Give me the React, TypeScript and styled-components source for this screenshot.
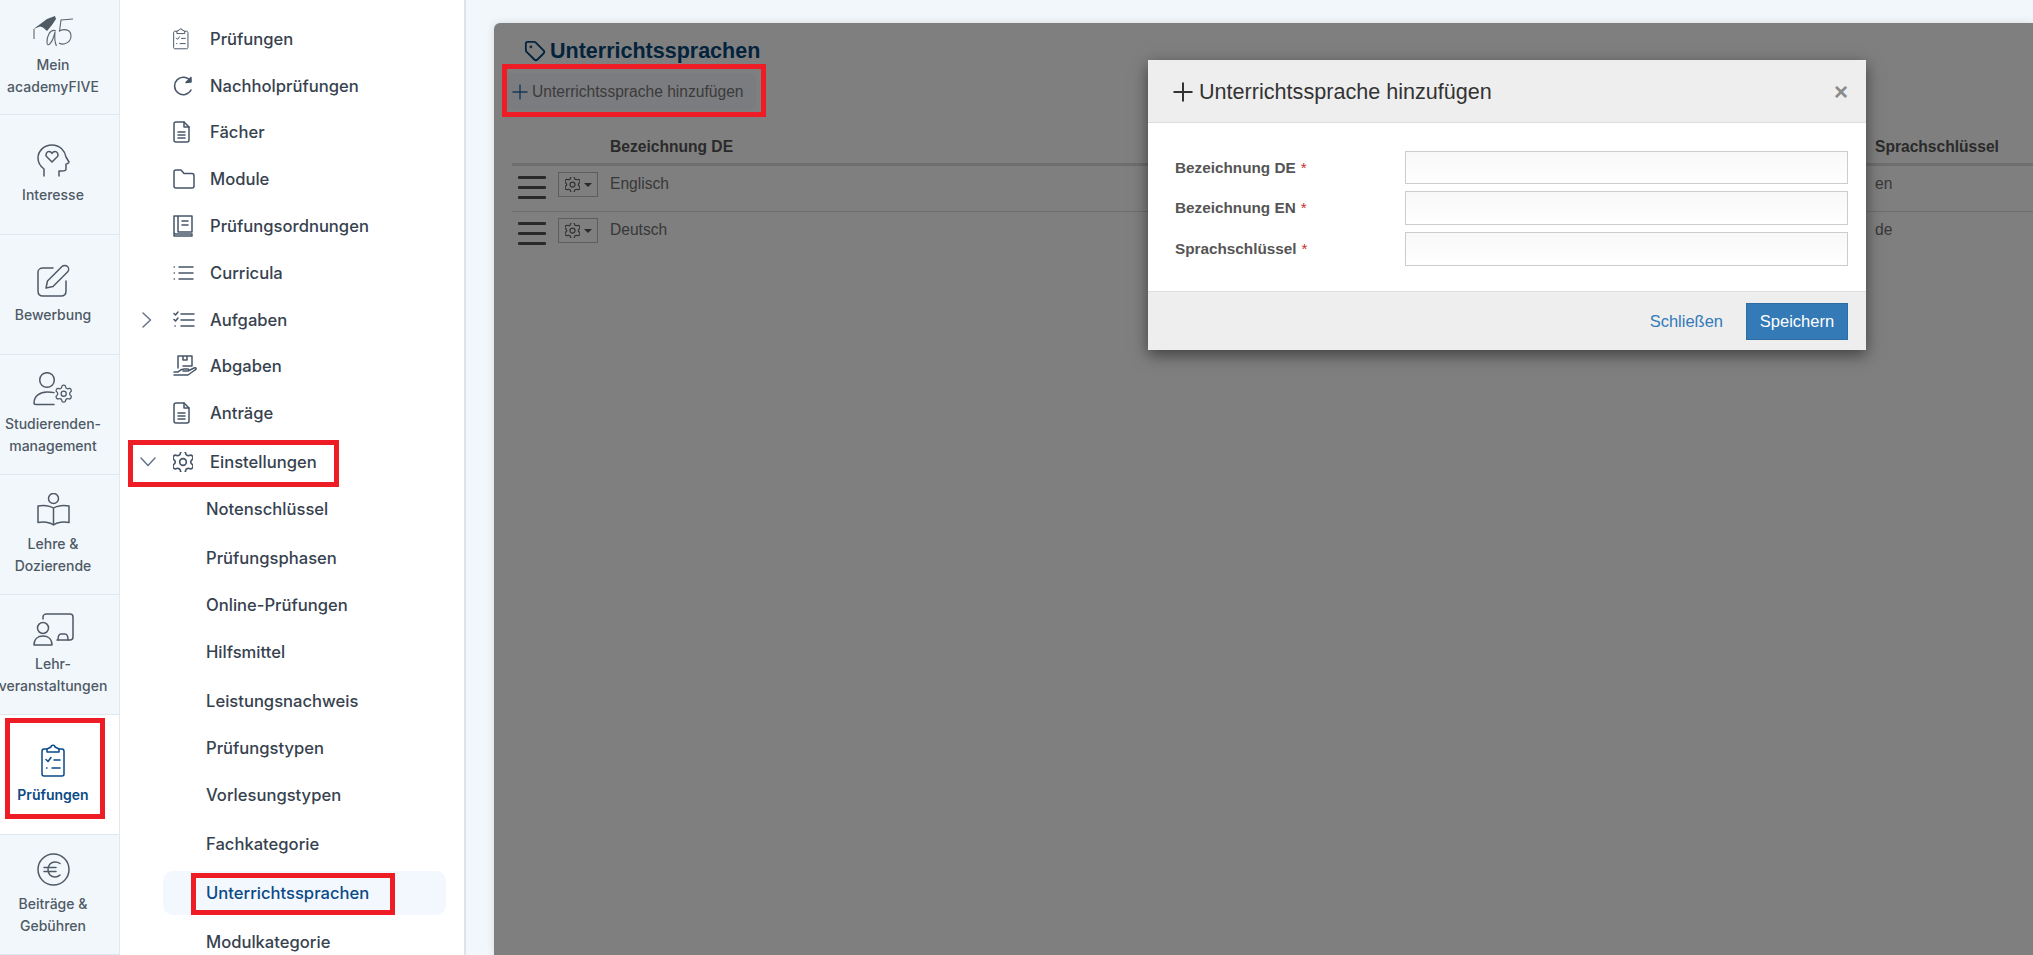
import { ReactNode } from "react";
import styled, { createGlobalStyle } from "styled-components";
import { Plus, Tag } from "lucide-react";

const GlobalStyle = createGlobalStyle`
  html, body {
    margin: 0;
    padding: 0;
    background: #f2f7fb;
    overflow: hidden;
  }
  * {
    box-sizing: border-box;
  }
`;

const Page = styled.div`
  position: relative;
  display: flex;
  width: 2033px;
  height: 955px;
  overflow: hidden;
  background: #f2f7fb;
  font-family: Inter, "Liberation Sans", sans-serif;
`;

const Rail = styled.aside`
  flex: 0 0 120px;
  min-width: 0;
  overflow: hidden;
  border-right: 1px solid #e0e9f0;
  background: #f2f7fb;
`;

const RailItem = styled.div<{ $active?: boolean; $first?: boolean }>`
  position: relative;
  display: flex;
  flex-direction: column;
  align-items: center;
  justify-content: center;
  gap: 7px;
  height: ${(p) => (p.$first ? "115px" : "120px")};
  padding-right: 13px;
  border-bottom: 1px solid #dfe8ef;
  background: ${(p) => (p.$active ? "#fff" : "transparent")};
  color: ${(p) => (p.$active ? "#0b4a86" : "#4e5a66")};
`;

const RailLabel = styled.div<{ $active?: boolean }>`
  font-size: 14px;
  line-height: 22px;
  font-weight: ${(p) => (p.$active ? 600 : 500)};
  text-align: center;
  white-space: nowrap;
`;

const Glyph = styled.svg`
  display: block;
  flex: none;
  fill: none;
  stroke: currentColor;
  stroke-width: 1.5;
  stroke-linecap: round;
  stroke-linejoin: round;
`;

const Nav = styled.nav`
  flex: 0 0 346px;
  padding-top: 17px;
  border-right: 2px solid #dde5ec;
  background: #fff;
`;

const NavRow = styled.div<{ $gap: number }>`
  position: relative;
  display: flex;
  align-items: center;
  height: 44px;
  margin-top: ${(p) => p.$gap}px;
  padding-left: 20px;
  color: #37424f;
  font-size: 16.6px;
  font-weight: 500;
`;

const ChevronSlot = styled.span`
  display: flex;
  flex: 0 0 28px;
  color: #64748b;
`;

const IconSlot = styled.span`
  display: flex;
  flex: 0 0 28px;
  min-width: 0;
  margin-right: 14px;
  padding-left: 5px;
  color: #475569;
`;

const SubRow = styled.div<{ $gap: number; $active?: boolean }>`
  position: relative;
  display: flex;
  align-items: center;
  width: 283px;
  height: 44px;
  margin-top: ${(p) => p.$gap}px;
  margin-left: 43px;
  padding-left: 43px;
  border-radius: 10px;
  background: ${(p) => (p.$active ? "#f2f8fd" : "transparent")};
  color: ${(p) => (p.$active ? "#0b4a86" : "#37424f")};
  font-size: 16.6px;
  font-weight: 500;
`;

// the red marker frames that were painted over the screenshot
const Marker = styled.div<{ $left: number; $top: number; $w: number; $h: number }>`
  position: absolute;
  z-index: 5;
  left: ${(p) => p.$left}px;
  top: ${(p) => p.$top}px;
  width: ${(p) => p.$w}px;
  height: ${(p) => p.$h}px;
  border: 5px solid #ee1c25;
  pointer-events: none;
`;

const Main = styled.main`
  flex: 1;
  min-width: 0;
  padding: 23px 0 0 28px;
  background: #f2f7fb;
`;

const Panel = styled.section`
  position: relative;
  height: 100%;
  padding: 11px 0 0 13px;
  border-radius: 6px 0 0 0;
  background: #fff;
  box-shadow: 0 0 8px rgba(0, 0, 0, 0.12);
  font-family: "Liberation Sans", Arial, sans-serif;
  overflow: hidden;
`;

const Backdrop = styled.div`
  position: absolute;
  inset: 0;
  z-index: 2;
  background: rgba(0, 0, 0, 0.5);
`;

const Title = styled.h1`
  display: flex;
  align-items: center;
  gap: 4px;
  height: 34px;
  margin: 0 0 5px 17px;
  color: #07467a;
  font-size: 21.5px;
  font-weight: 700;
`;

const AddButton = styled.div`
  position: relative;
  display: flex;
  align-items: center;
  width: 249px;
  height: 37px;
  padding-left: 5px;
  border-radius: 5px;
  background: #f6f9fe;
  color: #777;
  font-size: 15.6px;
`;

const AddIcon = styled.span`
  display: flex;
  margin-left: -4px;
  color: #2f6ea8;
`;

const Table = styled.div`
  margin: 18px 0 0 5px;
`;

const TableHead = styled.div`
  display: grid;
  grid-template-columns: 98px 1fr 158px;
  align-items: center;
  height: 38px;
  padding-top: 3px;
  border-bottom: 3px solid #ddd;
  color: #555;
  font-size: 15.6px;
  font-weight: 700;
`;

const TableRow = styled.div<{ $last?: boolean }>`
  display: grid;
  grid-template-columns: 98px 1fr 158px;
  height: 46px;
  padding-top: 8px;
  border-bottom: ${(p) => (p.$last ? "0" : "1px solid #ddd")};
  color: #707070;
  font-size: 15.6px;
  line-height: 20px;
`;

const RowTools = styled.div`
  display: flex;
  align-items: flex-start;
  gap: 12px;
  padding-left: 6px;
`;

const Burger = styled.div`
  display: flex;
  flex-direction: column;
  gap: 7px;
  width: 28px;
  margin-top: 2px;
`;

const BurgerBar = styled.span`
  height: 3px;
  border-radius: 1px;
  background: #555;
`;

const GearButton = styled.div`
  display: flex;
  align-items: center;
  justify-content: center;
  gap: 4px;
  width: 40px;
  height: 25px;
  margin-top: -2px;
  border: 1px solid #bbb;
  color: #666;
`;

const Caret = styled.span`
  width: 0;
  height: 0;
  border-top: 4px solid #555;
  border-left: 4px solid transparent;
  border-right: 4px solid transparent;
`;

const Modal = styled.div`
  position: absolute;
  z-index: 3;
  left: 1148px;
  top: 60px;
  display: flex;
  flex-direction: column;
  width: 718px;
  height: 290px;
  background: #fff;
  box-shadow: 0 5px 15px rgba(0, 0, 0, 0.5);
  font-family: "Liberation Sans", Arial, sans-serif;
`;

const ModalHead = styled.header`
  display: flex;
  align-items: center;
  height: 63px;
  padding: 2px 18px 0 26px;
  border-bottom: 1px solid #ddd;
  background: #eee;
  color: #333;
  font-size: 21.6px;
`;

const ModalTitle = styled.div`
  display: flex;
  flex: 1;
  align-items: center;
  gap: 1px;
`;

const ModalPlus = styled.span`
  display: flex;
  margin-left: -6px;
`;

const CloseMark = styled.span`
  color: #8a8a8a;
  font-size: 24px;
  font-weight: 700;
  line-height: 1;
`;

const ModalBody = styled.div`
  display: flex;
  flex-direction: column;
  flex: 1;
  gap: 7px;
  padding: 28px 18px 0 27px;
`;

const Field = styled.div`
  display: flex;
  align-items: center;
  justify-content: space-between;

  &:first-child input {
    height: 33px;
  }
`;

const FieldLabel = styled.label`
  color: #555;
  font-size: 15.3px;
  font-weight: 700;
`;

const Required = styled.span`
  margin-left: 5px;
  color: #c9302c;
  font-weight: 400;
`;

const FieldInput = styled.input`
  width: 443px;
  height: 34px;
  padding: 0 8px;
  border: 1px solid #ccc;
  border-radius: 0;
  background: linear-gradient(#f8f8f8, #fff);
  outline: none;
`;

const ModalFoot = styled.footer`
  display: flex;
  align-items: center;
  justify-content: flex-end;
  gap: 23px;
  height: 59px;
  padding: 0 18px;
  border-top: 1px solid #ddd;
  background: #eee;
  font-size: 16.5px;
`;

const CloseLink = styled.span`
  color: #337ab7;
`;

const SaveButton = styled.span`
  display: flex;
  align-items: center;
  justify-content: center;
  width: 102px;
  height: 37px;
  border: 1px solid #2e6da4;
  background: #337ab7;
  color: #fff;
`;

const GEAR =
  "M9.671 4.136a2.34 2.34 0 0 1 4.659 0 2.34 2.34 0 0 0 3.319 1.915 2.34 2.34 0 0 1 2.33 4.033 2.34 2.34 0 0 0 0 3.831 2.34 2.34 0 0 1-2.33 4.033 2.34 2.34 0 0 0-3.319 1.915 2.34 2.34 0 0 1-4.659 0 2.34 2.34 0 0 0-3.32-1.915 2.34 2.34 0 0 1-2.33-4.033 2.34 2.34 0 0 0 0-3.831A2.34 2.34 0 0 1 6.35 6.051a2.34 2.34 0 0 0 3.319-1.915";

const Logo = () => (
  <svg width="41" height="31" viewBox="0 0 41 31" style={{ display: "block" }}>
    <path d="M0.5 13 L14 3 L22 0 L23 3 L19 9 L14 15 L10 11.5 L7 10.5 Z" fill="#4f5a63" />
    <path d="M1 13 V23" stroke="#8b949b" strokeWidth="1.6" fill="none" />
    <path
      d="M23 15 C17 12 13.5 21 14 27 C14.5 31 19 28.5 22 16 C21.5 21 21.5 26 23.5 30"
      stroke="#5b6770"
      strokeWidth="1.1"
      fill="none"
    />
    <path
      d="M40 3 L28 4 L26.5 15 C32 12 38 14 38 20 C38 26 31 30 26 27"
      stroke="#5b6770"
      strokeWidth="1.1"
      fill="none"
    />
  </svg>
);

const HeadIcon = () => (
  <Glyph width="33" height="33" viewBox="0 0 33 33">
    <path d="M7 32 V25 C3 22 1 18 1 14 C1 7 7 1 15 1 C23 1 28 7 29 13 L32 18 C32 19 30 20 29 20 V25 C29 27 27 27 25 27 H22 V32" />
    <path d="M15 18 L9.5 12.5 C8 10 10 7.5 12 7.5 C13.5 7.5 14.5 8.5 15 9.5 C15.5 8.5 16.5 7.5 18 7.5 C20 7.5 22 10 20.5 12.5 Z" />
  </Glyph>
);

const PenIcon = () => (
  <Glyph width="33" height="33" viewBox="0 0 33 33">
    <path d="M16 4 H6 C3 4 1 6 1 8 V27 C1 30 3 32 6 32 H24 C27 32 29 30 29 27 V17" />
    <path d="M9 24 L10.5 17 L25 2.5 C26.5 1 29 1 30.5 2.5 C32 4 32 6.5 30.5 8 L16 22.5 Z" />
  </Glyph>
);

const StudentIcon = () => (
  <Glyph width="41" height="34" viewBox="0 0 41 34">
    <circle cx="14" cy="8" r="7.3" />
    <path d="M21 20.6 C19 20 17 20 14 20 C7 20 1 24 1 31 C1 32 2 32.5 3 32.5 H21" />
    <g transform="translate(20.5 11.5) scale(0.85)">
      <path d={GEAR} />
      <circle cx="12" cy="12" r="3" />
    </g>
  </Glyph>
);

const BookIcon = () => (
  <Glyph width="33" height="33" viewBox="0 0 33 33">
    <circle cx="16.5" cy="5.5" r="5" />
    <path d="M16.5 15 C13 12.5 6 12 1 13 V29.5 C6 28.5 13 29 16.5 32 C20 29 27 28.5 32 29.5 V13 C27 12 20 12.5 16.5 15 V32" />
  </Glyph>
);

const ClassIcon = () => (
  <Glyph width="41" height="33" viewBox="0 0 41 33">
    <path d="M10 6 V4 C10 2 12 1 13 1 H37 C39 1 40 2 40 4 V24 C40 26 39 27 37 27 H24" />
    <path d="M25 27 C25 23 26 21 28 21 H32 C34 21 35 23 35 27" />
    <circle cx="10" cy="15" r="5.5" />
    <path d="M1 32 C1 26 5 23 10 23 C15 23 19 26 19 32 Z" />
  </Glyph>
);

const ClipIcon = ({ size = 1 }: { size?: number }) => (
  <Glyph width={24 * size} height={33 * size} viewBox="0 0 24 33" strokeWidth={size < 1 ? 2 : 1.6}>
    <path d="M6 5 H3 C1.5 5 1 6 1 7.5 V30 C1 31.5 2 32 3 32 H21 C22.5 32 23 31 23 30 V7.5 C23 6 22.5 5 21 5 H18" />
    <path d="M6 8 V5 L10 3 C10 0.5 14 0.5 14 3 L18 5 V8 Z" />
    <path d="M5 15.5 L7 17.5 L10 13.5 M13 16 H19 M11 24 H19 M5.5 24 H6" />
  </Glyph>
);

const EuroIcon = () => (
  <Glyph width="33" height="33" viewBox="0 0 33 33">
    <circle cx="16.5" cy="16.5" r="15.5" />
    <path d="M23 10.5 C21 9 19.5 9 18 9 C14 9 11 12 11 16.5 C11 21 14 24 18 24 C20 24 21.5 23.5 23 22 M7 14.5 H19 M7 18.5 H19" />
  </Glyph>
);

const RetakeIcon = () => (
  <Glyph width="20" height="20" viewBox="0 0 20 20">
    <path d="M17.5 5 A8.7 8.7 0 1 0 18 14" />
    <path d="M13 6.5 L18 6 L18 1.5 Z" fill="currentColor" />
  </Glyph>
);

const FileIcon = () => (
  <Glyph width="17" height="22" viewBox="0 0 17 22">
    <path d="M3 1 H11 L16 6 V19 C16 20.5 15 21 14 21 H3 C2 21 1 20.5 1 19 V3 C1 1.5 2 1 3 1 Z" />
    <path d="M11 1 V6 H16 M5 11 H12 M5 14 H12 M5 17 H12" />
  </Glyph>
);

const FolderIcon = () => (
  <Glyph width="22" height="20" viewBox="0 0 22 20">
    <path d="M3 1 H8 L11 4.5 H19 C20.5 4.5 21 5.5 21 7 V17 C21 18.5 20.5 19 19 19 H3 C1.5 19 1 18.5 1 17 V3 C1 1.5 1.5 1 3 1 Z" />
  </Glyph>
);

const RulesIcon = () => (
  <Glyph width="20" height="22" viewBox="0 0 20 22" strokeWidth={1.3}>
    <path d="M5 1 H19 V17 H5 M5 1 H1 V21 H19 V19 H3 C1.5 19 1 18 1 17 M5 1 V17 M9 6 H15 M9 10 H15" />
  </Glyph>
);

const ListIcon = () => (
  <Glyph width="21" height="16" viewBox="0 0 21 16">
    <path d="M6 2 H20 M6 8 H20 M6 14 H20 M1.2 2 H1.4 M1.2 8 H1.4 M1.2 14 H1.4" />
  </Glyph>
);

const CheckListIcon = () => (
  <Glyph width="22" height="18" viewBox="0 0 22 18">
    <path d="M8 3 H21 M8 9 H21 M8 15 H21 M1 2.5 L2.5 4 L5 1 M1 8.5 L2.5 10 L5 7 M2 15 H2.2" />
  </Glyph>
);

const HandBoxIcon = () => (
  <Glyph width="24" height="22" viewBox="0 0 24 22">
    <path d="M5 13 V1 H19 V11 H10 M10 1 V5 H14 V1" />
    <path d="M1 17 H5 C7 15 9 14 11 14 H15 C16 14 16 16 15 16 H10 M15 16 L21 13 C23 12 24 14 22 15 L15 20 H1" />
  </Glyph>
);

const GearIcon = ({ size }: { size: number }) => (
  <Glyph width={size} height={size} viewBox="3 3 18 18">
    <path d={GEAR} />
    <circle cx="12" cy="12" r="3" />
  </Glyph>
);

const Chevron = ({ down }: { down?: boolean }) =>
  down ? (
    <Glyph width="16" height="10" viewBox="0 0 16 10" strokeWidth={2}>
      <path d="M1 1 L8 8.5 L15 1" />
    </Glyph>
  ) : (
    <Glyph width="10" height="16" viewBox="0 0 10 16" strokeWidth={2} style={{ marginLeft: 2 }}>
      <path d="M1 1 L8.5 8 L1 15" />
    </Glyph>
  );

interface RailEntry {
  lines: string[];
  icon: ReactNode;
  active?: boolean;
}

const railEntries: RailEntry[] = [
  { lines: ["Mein", "academyFIVE"], icon: <Logo /> },
  { lines: ["Interesse"], icon: <HeadIcon /> },
  { lines: ["Bewerbung"], icon: <PenIcon /> },
  { lines: ["Studierenden-", "management"], icon: <StudentIcon /> },
  { lines: ["Lehre &", "Dozierende"], icon: <BookIcon /> },
  { lines: ["Lehr-", "veranstaltungen"], icon: <ClassIcon /> },
  { lines: ["Prüfungen"], icon: <ClipIcon />, active: true },
  { lines: ["Beiträge &", "Gebühren"], icon: <EuroIcon /> },
];

const navEntries = [
  { label: "Prüfungen", center: 39, icon: <ClipIcon size={0.65} /> },
  { label: "Nachholprüfungen", center: 86, icon: <RetakeIcon /> },
  { label: "Fächer", center: 132, icon: <FileIcon /> },
  { label: "Module", center: 179, icon: <FolderIcon /> },
  { label: "Prüfungsordnungen", center: 226, icon: <RulesIcon /> },
  { label: "Curricula", center: 273, icon: <ListIcon /> },
  { label: "Aufgaben", center: 320, icon: <CheckListIcon />, chevron: "right" },
  { label: "Abgaben", center: 366, icon: <HandBoxIcon /> },
  { label: "Anträge", center: 413, icon: <FileIcon /> },
  { label: "Einstellungen", center: 462, icon: <GearIcon size={20} />, chevron: "down", marked: true },
];

const subEntries = [
  { label: "Notenschlüssel", center: 509 },
  { label: "Prüfungsphasen", center: 558 },
  { label: "Online-Prüfungen", center: 605 },
  { label: "Hilfsmittel", center: 652 },
  { label: "Leistungsnachweis", center: 701 },
  { label: "Prüfungstypen", center: 748 },
  { label: "Vorlesungstypen", center: 795 },
  { label: "Fachkategorie", center: 844 },
  { label: "Unterrichtssprachen", center: 893, active: true },
  { label: "Modulkategorie", center: 942 },
];

const rows = [
  { name: "Englisch", key: "en" },
  { name: "Deutsch", key: "de" },
];

const fields = ["Bezeichnung DE", "Bezeichnung EN", "Sprachschlüssel"];

export default function App() {
  return (
    <Page>
      <GlobalStyle />
      <Rail>
        {railEntries.map((entry, i) => (
          <RailItem key={entry.lines[0]} $active={entry.active} $first={i === 0}>
            {entry.icon}
            <div>
              {entry.lines.map((line) => (
                <RailLabel key={line} $active={entry.active}>
                  {line}
                </RailLabel>
              ))}
            </div>
            {entry.active && <Marker $left={5} $top={3} $w={100} $h={101} />}
          </RailItem>
        ))}
      </Rail>

      <Nav>
        {navEntries.map((entry, i) => (
          <NavRow key={entry.label} $gap={i === 0 ? 0 : entry.center - navEntries[i - 1].center - 44}>
            <ChevronSlot>
              {entry.chevron && <Chevron down={entry.chevron === "down"} />}
            </ChevronSlot>
            <IconSlot>{entry.icon}</IconSlot>
            {entry.label}
            {entry.marked && <Marker $left={8} $top={0} $w={211} $h={47} />}
          </NavRow>
        ))}
        {subEntries.map((entry, i) => (
          <SubRow
            key={entry.label}
            $active={entry.active}
            $gap={entry.center - (i === 0 ? 462 : subEntries[i - 1].center) - 44}
          >
            {entry.label}
            {entry.active && <Marker $left={28} $top={2} $w={204} $h={42} />}
          </SubRow>
        ))}
      </Nav>

      <Main>
        <Panel>
          <Title>
            <Tag size={22} strokeWidth={2} />
            Unterrichtssprachen
          </Title>
          <AddButton>
            <AddIcon>
              <Plus size={24} strokeWidth={1.4} />
            </AddIcon>
            Unterrichtssprache hinzufügen
          </AddButton>
          <Table>
            <TableHead>
              <span />
              <span>Bezeichnung DE</span>
              <span>Sprachschlüssel</span>
            </TableHead>
            {rows.map((row, i) => (
              <TableRow key={row.key} $last={i === rows.length - 1}>
                <RowTools>
                  <Burger>
                    <BurgerBar />
                    <BurgerBar />
                    <BurgerBar />
                  </Burger>
                  <GearButton>
                    <GearIcon size={15} />
                    <Caret />
                  </GearButton>
                </RowTools>
                <span>{row.name}</span>
                <span>{row.key}</span>
              </TableRow>
            ))}
          </Table>
          <Backdrop />
        </Panel>
      </Main>

      <Marker $left={502} $top={64} $w={264} $h={53} />

      <Modal>
        <ModalHead>
          <ModalTitle>
            <ModalPlus>
              <Plus size={30} strokeWidth={1.6} />
            </ModalPlus>
            Unterrichtssprache hinzufügen
          </ModalTitle>
          <CloseMark>×</CloseMark>
        </ModalHead>
        <ModalBody>
          {fields.map((field) => (
            <Field key={field}>
              <FieldLabel>
                {field}
                <Required>*</Required>
              </FieldLabel>
              <FieldInput />
            </Field>
          ))}
        </ModalBody>
        <ModalFoot>
          <CloseLink>Schließen</CloseLink>
          <SaveButton>Speichern</SaveButton>
        </ModalFoot>
      </Modal>
    </Page>
  );
}
